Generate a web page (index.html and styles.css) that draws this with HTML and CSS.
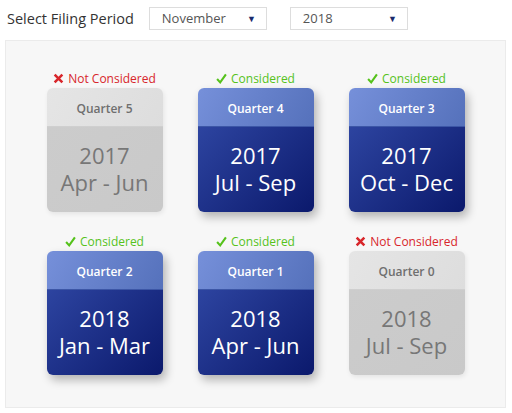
FILE: index.html
```html
<!DOCTYPE html>
<html lang="en">
<head>
    <meta charset="UTF-8">
    <title>Filing Period</title>
    <link rel="stylesheet" href="styles.css">
</head>
<body>
    <div class="toolbar">
        <span class="toolbar-label">Select Filing Period</span>
        <div class="select"><span>November</span><span class="caret">&#9660;</span></div>
        <div class="select"><span>2018</span><span class="caret">&#9660;</span></div>
    </div>

    <div class="panel">
        <div class="grid">
            <div class="cell">
                <div class="status status-no"><svg viewBox="0 0 10 10"><path d="M1.5 1.5 L8.5 8.5 M8.5 1.5 L1.5 8.5"/></svg>Not Considered</div>
                <div class="card card-off">
                    <div class="card-head">Quarter 5</div>
                    <div class="card-body"><div>2017</div><div>Apr - Jun</div></div>
                </div>
            </div>
            <div class="cell">
                <div class="status status-ok"><svg viewBox="0 0 10 10"><path d="M1 5.5 L3.8 8.5 L9 1.2"/></svg>Considered</div>
                <div class="card card-on">
                    <div class="card-head">Quarter 4</div>
                    <div class="card-body"><div>2017</div><div>Jul - Sep</div></div>
                </div>
            </div>
            <div class="cell">
                <div class="status status-ok"><svg viewBox="0 0 10 10"><path d="M1 5.5 L3.8 8.5 L9 1.2"/></svg>Considered</div>
                <div class="card card-on">
                    <div class="card-head">Quarter 3</div>
                    <div class="card-body"><div>2017</div><div>Oct - Dec</div></div>
                </div>
            </div>
            <div class="cell">
                <div class="status status-ok"><svg viewBox="0 0 10 10"><path d="M1 5.5 L3.8 8.5 L9 1.2"/></svg>Considered</div>
                <div class="card card-on">
                    <div class="card-head">Quarter 2</div>
                    <div class="card-body"><div>2018</div><div>Jan - Mar</div></div>
                </div>
            </div>
            <div class="cell">
                <div class="status status-ok"><svg viewBox="0 0 10 10"><path d="M1 5.5 L3.8 8.5 L9 1.2"/></svg>Considered</div>
                <div class="card card-on">
                    <div class="card-head">Quarter 1</div>
                    <div class="card-body"><div>2018</div><div>Apr - Jun</div></div>
                </div>
            </div>
            <div class="cell">
                <div class="status status-no"><svg viewBox="0 0 10 10"><path d="M1.5 1.5 L8.5 8.5 M8.5 1.5 L1.5 8.5"/></svg>Not Considered</div>
                <div class="card card-off">
                    <div class="card-head">Quarter 0</div>
                    <div class="card-body"><div>2018</div><div>Jul - Sep</div></div>
                </div>
            </div>
        </div>
    </div>
</body>
</html>
```

FILE: styles.css
```css
body {
    margin: 0;
    font-family: 'Open Sans', 'Liberation Sans', sans-serif;
    background-color: #fff;
    color: #333;
}

.toolbar {
    display: flex;
    align-items: center;
    height: 35px;
    padding-left: 7px;
    padding-top: 1px;
    box-sizing: border-box;
}

.toolbar-label {
    font-size: 14.5px;
    color: #333;
    margin-right: 15px;
}

.select {
    width: 118px;
    height: 23px;
    box-sizing: border-box;
    border: 1px solid #ddd;
    background-color: #fff;
    display: flex;
    align-items: center;
    justify-content: space-between;
    padding: 0 10px 0 12px;
    font-size: 13px;
    color: #555;
    margin-right: 23px;
}

.caret {
    font-size: 9px;
    color: #1a2a6c;
}

.panel {
    margin: 5px 6px 4px 5px;
    height: 368px;
    box-sizing: border-box;
    background-color: #f7f7f7;
    border: 1px solid #ebebeb;
    padding-top: 29px;
}

.grid {
    display: grid;
    grid-template-columns: repeat(3, 116px);
    column-gap: 35px;
    row-gap: 21px;
    justify-content: center;
}

.cell {
    display: flex;
    flex-direction: column;
    align-items: center;
}

.status {
    display: flex;
    align-items: center;
    font-size: 12px;
    height: 16px;
    margin-bottom: 2px;
}

.status svg {
    width: 11px;
    height: 11px;
    margin-right: 4px;
    fill: none;
}

.status-ok {
    color: #55c21b;
}

.status-ok svg {
    stroke: #55c21b;
    stroke-width: 1.9;
}

.status-no {
    color: #d8262b;
}

.status-no svg {
    stroke: #d8262b;
    stroke-width: 2.3;
}

.card {
    width: 116px;
    height: 124px;
    border-radius: 6px;
    overflow: hidden;
    display: flex;
    flex-direction: column;
}

.card-head {
    height: 39px;
    box-sizing: border-box;
    padding-top: 3px;
    display: flex;
    align-items: center;
    justify-content: center;
    font-size: 12px;
    font-weight: 600;
}

.card-body {
    flex: 1;
    display: flex;
    flex-direction: column;
    align-items: center;
    justify-content: center;
    text-align: center;
    font-size: 22px;
    line-height: 27px;
    padding-bottom: 1px;
}

.card-on {
    color: #fff;
    box-shadow: 3px 5px 10px rgba(0, 0, 0, 0.28);
}

.card-on .card-head {
    background: linear-gradient(120deg, #7690da, #5571bb);
    border-bottom: 1px solid #3c56a6;
}

.card-on .card-body {
    background: linear-gradient(135deg, #2d44a0, #0b196c);
}

.card-off {
    color: #777;
    box-shadow: 1px 2px 5px rgba(0, 0, 0, 0.08);
}

.card-off .card-head {
    background: linear-gradient(120deg, #e5e5e5, #dddddd);
    color: #6f6f6f;
    border-bottom: 1px solid #cfcfcf;
}

.card-off .card-body {
    background: linear-gradient(135deg, #cccccc, #c9c9c9);
}
```
